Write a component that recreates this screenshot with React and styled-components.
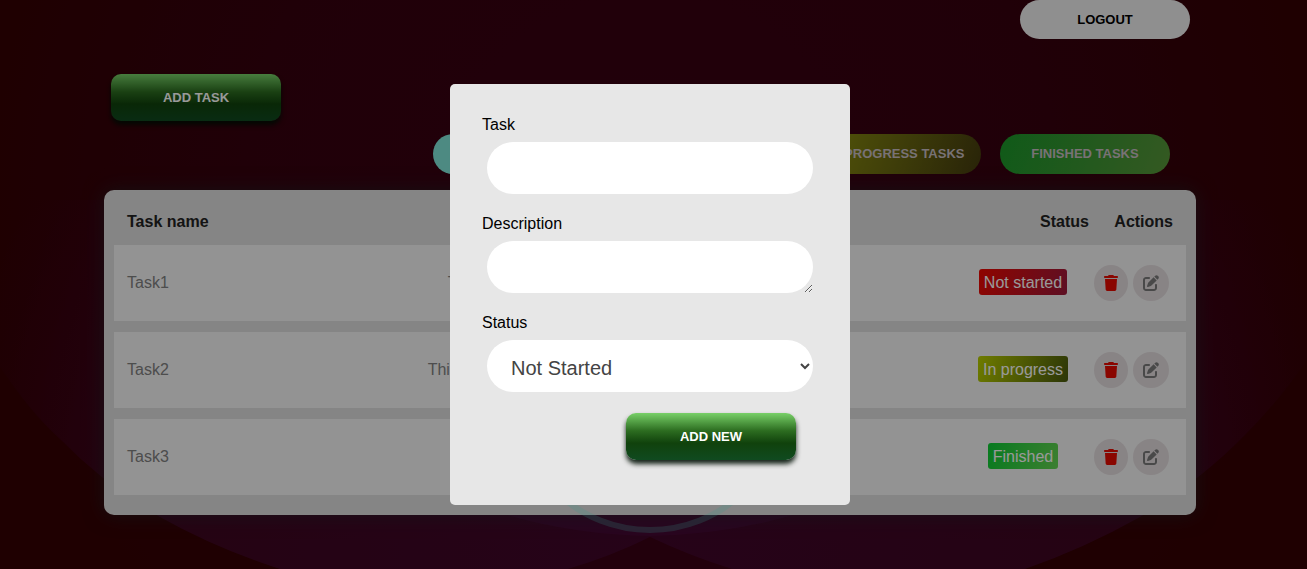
import React from "react";
import styled, { createGlobalStyle, css } from "styled-components";
import { FaTrash, FaPenToSquare } from "react-icons/fa6";

const GlobalStyle = createGlobalStyle`
  *, *::before, *::after { box-sizing: border-box; }
  body {
    margin: 0;
    background: #340002;
    font-family: Arial, "Liberation Sans", sans-serif;
    font-size: 16px;
    line-height: 18px;
  }
  button, input, textarea, select { font-family: inherit; }
`;

const Page = styled.div`
  position: relative;
  min-height: 100vh;
  overflow: hidden;
`;

const Backdrop = styled.svg`
  position: absolute;
  inset: 0;
  width: 100%;
  height: 100%;
`;

const Main = styled.main`
  position: relative;
  padding: 0 111px 54px 104px;
`;

const TopBar = styled.header`
  display: flex;
  justify-content: flex-end;
  padding-right: 6px;
`;

const Toolbar = styled.div`
  padding: 35px 7px 0;
`;

const Filters = styled.nav`
  display: flex;
  justify-content: flex-end;
  gap: 19px;
  padding: 13px 26px 16px 0;
`;

const buttonBase = css`
  width: 170px;
  padding: 0;
  border: 0;
  font-size: 13px;
  font-weight: 700;
  text-transform: uppercase;
  cursor: pointer;
`;

const PillButton = styled.button`
  ${buttonBase}
  height: 40px;
  padding-bottom: 2px;
  border-radius: 20px;
  background: ${(p) => p.$fill};
  color: #c8bec3;
  white-space: nowrap;
`;

const LogoutButton = styled.button`
  ${buttonBase}
  height: 39px;
  border-radius: 20px;
  background: #efefef;
  color: #000;
`;

const GreenButton = styled.button`
  ${buttonBase}
  height: 47px;
  border-radius: 10px;
  background: linear-gradient(#78d068 0%, #2c6c20 38%, #10420c 64%, #104a20 100%);
  box-shadow: 0 4px 5px rgba(0, 16, 4, 0.9);
  color: #fff;
`;

const Card = styled.section`
  padding: 0 10px 9px;
  border-radius: 10px;
  background: #dedede;
  box-shadow: 0 0 20px rgba(30, 50, 50, 0.55);
`;

const Table = styled.table`
  width: 100%;
  table-layout: fixed;
  border-collapse: separate;
  border-spacing: 0 11px;
`;

const HeadCell = styled.th`
  width: ${(p) => p.$width || "auto"};
  height: 33px;
  padding: ${(p) => p.$pad || "8px 0 0"};
  color: #222;
  text-align: ${(p) => p.$align || "center"};
`;

const Cell = styled.td`
  height: 76px;
  padding: ${(p) => p.$pad || "0"};
  background: #f5f5f5;
  color: #808080;
  text-align: ${(p) => p.$align || "center"};
`;

const Badge = styled.span`
  display: inline-block;
  padding: 5px 5px 3px;
  border-radius: 3px;
  background: ${(p) => p.$fill};
  color: #fff;
`;

const Actions = styled.div`
  display: flex;
  gap: 5px;
`;

const IconButton = styled.button`
  display: flex;
  padding: 10px;
  border: 0;
  border-radius: 50%;
  background: #e3dcde;
  color: ${(p) => p.$color};
  cursor: pointer;

  svg {
    display: block;
    width: ${(p) => p.$iconWidth};
    height: 16px;
  }
`;

const Ring = styled.div`
  position: absolute;
  top: 257px;
  left: calc(50% - 4px);
  width: 276px;
  height: 276px;
  transform: translateX(-50%);
  border: 6px solid rgba(90, 255, 230, 0.2);
  border-radius: 50%;
  pointer-events: none;
`;

const Scrim = styled.div`
  position: absolute;
  inset: 0;
  display: flex;
  align-items: flex-start;
  justify-content: center;
  padding: 84px 7px 0 0;
  background: rgba(0, 0, 0, 0.4);
`;

const Dialog = styled.form`
  width: 400px;
  padding: 32px 32px 45px;
  border-radius: 5px;
  background: #e7e7e7;
`;

const Field = styled.div`
  display: flex;
  flex-direction: column;
  gap: 8px;
  margin-bottom: 21px;
`;

const control = css`
  height: 52px;
  margin: 0 5px;
  border: 0;
  border-radius: 26px;
  outline: 0;
  background: #fff;
  color: #444;
  font-size: 20px;
`;

const TextInput = styled.input`
  ${control}
  padding: 0 24px;
`;

const TextArea = styled.textarea`
  ${control}
  padding: 14px 24px;
`;

const Select = styled.select`
  ${control}
  padding: 4px 0 0 20px;
`;

const DialogFooter = styled.div`
  display: flex;
  justify-content: flex-end;
  padding-right: 22px;
`;

const filters = [
  { label: "All tasks", fill: "#80e6d9" },
  { label: "Not started tasks", fill: "linear-gradient(110deg, #ee0800, #a21b3a)" },
  { label: "In progress tasks", fill: "linear-gradient(110deg, #8f9410, #443b0e)" },
  { label: "Finished tasks", fill: "linear-gradient(110deg, #1b962a, #589439)" },
];

const statusFill = {
  "Not started": "linear-gradient(110deg, #ee0800, #9c1a3c)",
  "In progress": "linear-gradient(110deg, #b8ce00, #4a5a0d)",
  Finished: "linear-gradient(110deg, #0ccc34, #66d452)",
};

const tasks = [
  { name: "Task1", description: "Task description", status: "Not started" },
  { name: "Task2", description: "This is the description", status: "In progress" },
  { name: "Task3", description: "Description", status: "Finished" },
];

function BackdropArt() {
  return (
    <Backdrop viewBox="0 0 1307 569" preserveAspectRatio="none" aria-hidden="true">
      <defs>
        <radialGradient id="base" gradientUnits="userSpaceOnUse" cx="650" cy="200" r="680">
          <stop offset="0" stopColor="#380014" />
          <stop offset="0.6" stopColor="#36000e" />
          <stop offset="1" stopColor="#340002" />
        </radialGradient>
        <radialGradient id="glow" gradientUnits="userSpaceOnUse" cx="650" cy="520" r="700">
          <stop offset="0" stopColor="#40062a" />
          <stop offset="0.7" stopColor="#3e0620" />
          <stop offset="0.8" stopColor="#3b0318" />
          <stop offset="1" stopColor="#380012" stopOpacity="0" />
        </radialGradient>
      </defs>
      <rect width="1307" height="569" fill="url(#base)" />
      <path d="M0 367Q30 412 60 439Q105 485 160 517Q215 548 280 569H0Z" fill="#340004" opacity="0.8" />
      <path d="M1307 360Q1280 400 1245 435Q1200 481 1140 517Q1085 548 1025 569H1307Z" fill="#340004" opacity="0.8" />
      <path d="M0 200V367Q30 412 60 439Q105 485 160 517Q215 548 280 569H1025Q1085 548 1140 517Q1200 481 1245 435Q1280 400 1307 360V200Z" fill="url(#glow)" />
      <path d="M507 515Q575 535 650 536Q725 535 793 515Z" fill="#460c38" opacity="0.7" />
      <path d="M650 537Q612 556 568 569H732Q690 556 650 537Z" fill="#3a0014" />
    </Backdrop>
  );
}

export default function App() {
  return (
    <Page>
      <GlobalStyle />
      <BackdropArt />
      <Main>
        <TopBar>
          <LogoutButton type="button">Logout</LogoutButton>
        </TopBar>
        <Toolbar>
          <GreenButton type="button">Add task</GreenButton>
        </Toolbar>
        <Filters aria-label="Filter tasks">
          {filters.map((f) => (
            <PillButton key={f.label} type="button" $fill={f.fill}>
              {f.label}
            </PillButton>
          ))}
        </Filters>
        <Card>
          <Table>
            <thead>
              <tr>
                <HeadCell $width="120px" $align="left" $pad="8px 0 0 13px">Task name</HeadCell>
                <HeadCell $pad="8px 181px 0 0">Description</HeadCell>
                <HeadCell $width="132px" $align="right">Status</HeadCell>
                <HeadCell $width="97px" $align="right" $pad="8px 13px 0 0">Actions</HeadCell>
              </tr>
            </thead>
            <tbody>
              {tasks.map((t) => (
                <tr key={t.name}>
                  <Cell $align="left" $pad="0 0 0 13px">{t.name}</Cell>
                  <Cell $pad="0 181px 0 0">{t.description}</Cell>
                  <Cell $pad="0 0 2px">
                    <Badge $fill={statusFill[t.status]}>{t.status}</Badge>
                  </Cell>
                  <Cell $pad="0 0 0 5px">
                    <Actions>
                      <IconButton type="button" $color="#e60a00" $iconWidth="14px" aria-label={`Delete ${t.name}`}>
                        <FaTrash />
                      </IconButton>
                      <IconButton type="button" $color="#7b7b7b" $iconWidth="16px" aria-label={`Edit ${t.name}`}>
                        <FaPenToSquare />
                      </IconButton>
                    </Actions>
                  </Cell>
                </tr>
              ))}
            </tbody>
          </Table>
        </Card>
      </Main>
      <Ring />
      <Scrim>
        <Dialog role="dialog" aria-label="Add task" onSubmit={(e) => e.preventDefault()}>
          <Field>
            <label htmlFor="task">Task</label>
            <TextInput id="task" type="text" />
          </Field>
          <Field>
            <label htmlFor="description">Description</label>
            <TextArea id="description" rows={1} />
          </Field>
          <Field>
            <label htmlFor="status">Status</label>
            <Select id="status" defaultValue="Not Started">
              <option>Not Started</option>
              <option>In Progress</option>
              <option>Finished</option>
            </Select>
          </Field>
          <DialogFooter>
            <GreenButton type="submit">Add new</GreenButton>
          </DialogFooter>
        </Dialog>
      </Scrim>
    </Page>
  );
}
